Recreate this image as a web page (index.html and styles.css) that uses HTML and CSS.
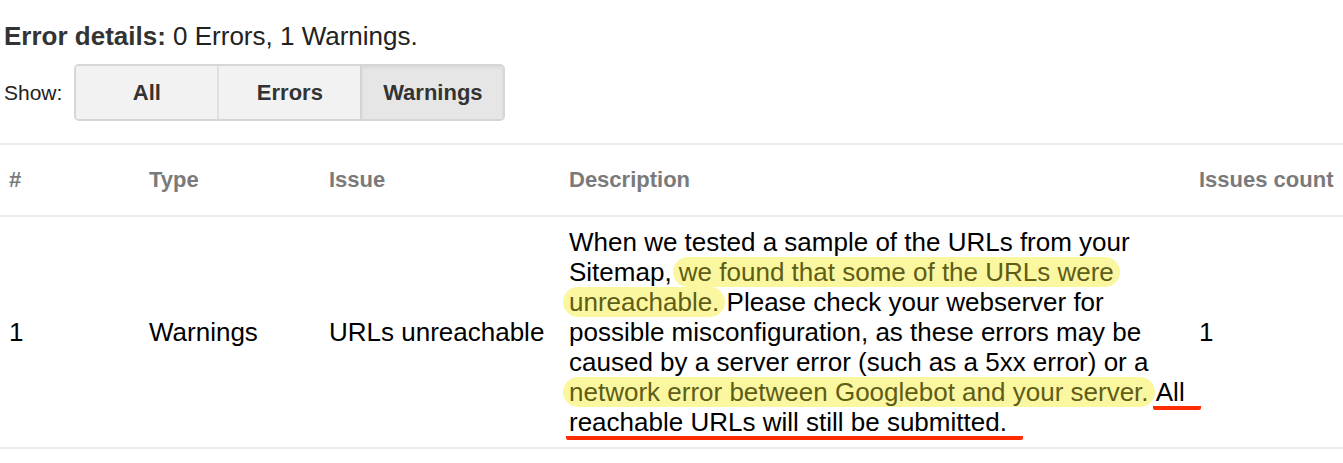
FILE: index.html
```html
<!DOCTYPE html>
<html lang="en">
<head>
  <meta charset="UTF-8">
  <title>Sitemap error details</title>
  <link rel="stylesheet" href="styles.css">
</head>
<body>
  <section class="summary">
    <p class="summary-title"><strong>Error details:</strong> 0 Errors, 1 Warnings.</p>
    <div class="filter">
      <span class="filter-label">Show:</span>
      <div class="btn-group">
        <button type="button" class="btn">All</button>
        <button type="button" class="btn">Errors</button>
        <button type="button" class="btn active">Warnings</button>
      </div>
    </div>
  </section>

  <table class="issues">
    <colgroup>
      <col class="col-num">
      <col class="col-type">
      <col class="col-issue">
      <col class="col-desc">
      <col class="col-count">
    </colgroup>
    <thead>
      <tr>
        <th>#</th>
        <th>Type</th>
        <th>Issue</th>
        <th>Description</th>
        <th>Issues count</th>
      </tr>
    </thead>
    <tbody>
      <tr>
        <td>1</td>
        <td>Warnings</td>
        <td>URLs unreachable</td>
        <td class="desc">When we tested a sample of the URLs from your Sitemap, <span class="hl">we found that some of the URLs were unreachable.</span> Please check your webserver for possible misconfiguration, as these errors may be caused by a server error (such as a 5xx error) or a <span class="hl">network error between Googlebot and your server.</span> <span class="ul">All reachable URLs will still be submitted.</span></td>
        <td>1</td>
      </tr>
    </tbody>
  </table>
</body>
</html>
```

FILE: styles.css
```css
body {
  margin: 0;
  font-family: "Liberation Sans", Arial, sans-serif;
  color: #111;
  background: #fff;
}
.summary {
  padding: 0 4px;
}
.summary-title {
  margin: 0;
  padding-top: 22px;
  font-size: 26px;
  line-height: 28px;
  color: #222;
}
.summary-title strong {
  color: #333;
}
.filter {
  display: flex;
  align-items: center;
  gap: 12px;
  margin-top: 14px;
}
.filter-label {
  font-size: 21px;
  color: #222;
}
.btn-group {
  display: flex;
  border: 2px solid #d6d6d6;
  border-radius: 5px;
  overflow: hidden;
}
.btn {
  width: 143px;
  height: 53px;
  border: none;
  border-left: 2px solid #e0e0e0;
  background: #f2f2f2;
  font-family: "Liberation Sans", Arial, sans-serif;
  font-size: 22px;
  font-weight: bold;
  color: #333;
  padding: 0;
  cursor: pointer;
}
.btn:first-child {
  border-left: none;
  width: 141px;
}
.btn.active {
  background: #e6e6e6;
  border-left-color: #d4d4d4;
  box-shadow: inset 0 2px 3px rgba(0,0,0,0.06);
}
.issues {
  width: 100%;
  margin-top: 22px;
  border-collapse: collapse;
  table-layout: fixed;
  font-size: 26px;
}
.col-num { width: 140px; }
.col-type { width: 180px; }
.col-issue { width: 240px; }
.col-desc { width: 630px; }
.col-count { width: 153px; }
.issues th {
  text-align: left;
  font-size: 22px;
  font-weight: bold;
  color: #7a7a7a;
  padding: 22px 0 22px 9px;
  line-height: 26px;
  border-top: 2px solid #ececec;
  border-bottom: 2px solid #ececec;
  white-space: nowrap;
}
.issues td {
  padding: 10px 0 10px 9px;
  line-height: 30px;
  vertical-align: middle;
  color: #000;
  border-bottom: 2px solid #ececec;
}
.hl {
  background: #fbf7a0;
  color: #5e5d17;
  border-radius: 15px;
  padding: 0 6px;
  margin: 0 -6px;
  -webkit-box-decoration-break: clone;
  box-decoration-break: clone;
}
.ul {
  background: linear-gradient(#fe2c00, #fe2c00) no-repeat left bottom / 100% 4px;
  border-radius: 2px;
  padding: 0 16px 3px 3px;
  margin: 0 -16px 0 -3px;
  -webkit-box-decoration-break: clone;
  box-decoration-break: clone;
}
```
